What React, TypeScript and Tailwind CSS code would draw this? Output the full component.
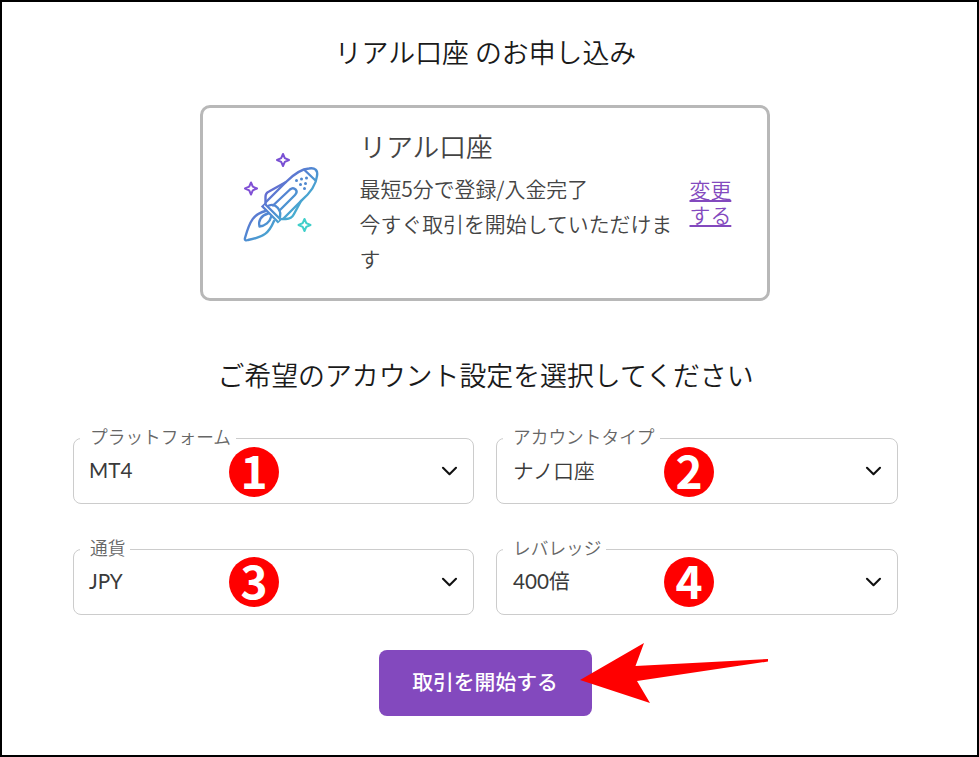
import React from 'react';

interface SelectFieldProps {
  label: string;
  value: string;
  step: number;
  valueClass: string;
  badgeClass: string;
}

const SelectField: React.FC<SelectFieldProps> = ({ label, value, step, valueClass, badgeClass }) => {
  return (
    <fieldset className="relative h-[77px] min-w-0 rounded-lg border border-[#cccccc] pr-[15px] pl-[6px]">
      <legend className="h-[22px] pr-[5px] pl-[10px] text-[17.7px] leading-[19px] font-[350] text-[#666666]">
        {label}
      </legend>
      <button type="button" className="flex h-[43px] w-full items-center justify-between text-[20.7px] leading-[43px] text-[#3a3a3a]">
        <span className={valueClass}>{value}</span>
        <svg className="h-[10px] w-[17px]" viewBox="0 0 17 10" fill="none" stroke="#111111" strokeWidth="2.1" strokeLinecap="round" strokeLinejoin="round">
          <path d="M2 1.8 8.5 8.2 15 1.8" />
        </svg>
      </button>
      <span className={`absolute flex h-[50px] w-[50px] justify-center rounded-full bg-[#ff0000] text-[46px] leading-[44px] font-bold text-white ${badgeClass}`}>
        {step}
      </span>
    </fieldset>
  );
};

const RocketIcon: React.FC = () => {
  return (
    <svg className="h-[110px] w-[110px] shrink-0" viewBox="0 0 110 110" fill="none" strokeWidth="2.4" strokeLinecap="round" strokeLinejoin="round">
      <defs>
        <linearGradient id="rocket" gradientUnits="userSpaceOnUse" x1="36" y1="36" x2="76" y2="76">
          <stop offset="0" stopColor="#7358d0" />
          <stop offset="0.5" stopColor="#5088d2" />
          <stop offset="1" stopColor="#42bfcf" />
        </linearGradient>
      </defs>
      <g stroke="url(#rocket)">
        <path d="M35.500 65V57C35.500 54 36.500 52.500 39 51.500L56 42C63 35 70 29 79 28.500C85 27.500 88 30 87 36C86 46 78 55 71 61L64 74C62 78 60 79 56 79H52" />
        <path d="M56 42 36 62M71 61 54 78M75 30.500 85 40" />
        <path d="M33 64.500 50 81.500" strokeWidth="6" strokeLinecap="butt" />
        <path d="M34.500 66 48.500 80" stroke="#ffffff" strokeWidth="1.200" />
        <path d="M43 65.500 60 49.500C64 46 69 51 65 55L49.500 70.500" />
        <path d="M39 65.500C44 63.500 48 67 49.500 70.500C51 73 50.500 75 50 77" />
        <path d="M35.500 71C24 74 20 80 15 98C14.500 100 15.500 101 18 100C34 97 39 93 44 81" />
        <path d="M38 73.500C31 75.500 28 81 29.500 86.500C35 86 40 82 41 77" />
      </g>
      <g fill="#5088cf">
        <circle cx="66.500" cy="40.500" r="1.500" />
        <circle cx="71.500" cy="39" r="1.500" />
        <circle cx="76.500" cy="38" r="1.500" />
        <circle cx="70.500" cy="44.500" r="1.500" />
        <circle cx="75.500" cy="43.500" r="1.500" />
        <circle cx="74.500" cy="48.500" r="1.500" />
      </g>
      <g strokeWidth="2">
        <path stroke="#7950d3" d="M53 14 54.800 18.200 59 20 54.800 21.800 53 26 51.200 21.800 47 20 51.200 18.200Z" />
        <path stroke="#8151d5" d="M21 42.500 22.800 46.700 27 48.500 22.800 50.300 21 54.500 19.200 50.300 15 48.500 19.200 46.700Z" />
        <path stroke="#40cfca" d="M74.500 79 76.300 83.200 80.500 85 76.300 86.800 74.500 91 72.700 86.800 68.500 85 72.700 83.200Z" />
      </g>
    </svg>
  );
};

const latinValue = "pl-[9px] font-['Lato','Noto_Sans_CJK_JP',sans-serif] font-normal";

const fields: SelectFieldProps[] = [
  { label: 'プラットフォーム', value: 'MT4', step: 1, valueClass: latinValue, badgeClass: 'top-[-2px] left-[155px]' },
  { label: 'アカウントタイプ', value: 'ナノ口座', step: 2, valueClass: 'pl-[10px] font-[350]', badgeClass: 'top-[-2px] left-[167px]' },
  { label: '通貨', value: 'JPY', step: 3, valueClass: latinValue, badgeClass: 'top-[-3px] left-[155px]' },
  { label: 'レバレッジ', value: '400倍', step: 4, valueClass: "pl-[10px] font-['Lato','Noto_Sans_CJK_JP',sans-serif] font-normal", badgeClass: 'top-[-3px] left-[167px]' },
];

const App: React.FC = () => {
  return (
    <main className="flex h-[757px] w-[979px] flex-col overflow-hidden border-2 border-black bg-white pt-[30px] pr-[79px] pl-[71px] font-['Noto_Sans_CJK_JP',sans-serif]">
      <h1 className="h-10 text-center text-[26.9px] leading-[39px] font-[350] text-[#1a1a1a]">リアル口座 のお申し込み</h1>

      <section className="mt-[33px] mr-[2px] flex h-[196px] w-[570px] self-center rounded-[10px] border-[3px] border-[#b8b8b8] pt-[21px] pl-[27px]">
        <div className="mt-[11px]">
          <RocketIcon />
        </div>
        <div className="ml-[20px] w-[316px] shrink-0 text-[#444444]">
          <h2 className="h-[42px] text-[26.7px] leading-[34px] font-[350]">リアル口座</h2>
          <p className="text-[20.9px] leading-[35px] font-[350]">
            最短5分で登録/入金完了
            <br />
            今すぐ取引を開始していただけます
          </p>
        </div>
        <a href="#" className="mt-[48px] ml-[14px] w-[42px] shrink-0 text-[20.9px] leading-[25px] font-[350] text-[#8349be] underline decoration-2 underline-offset-[2px]">
          変更する
        </a>
      </section>

      <h2 className="mt-[54px] h-10 text-center text-[26.9px] leading-[39px] font-[350] text-[#1a1a1a]">ご希望のアカウント設定を選択してください</h2>

      <div className="mt-[32px] grid grid-cols-[401px_402px] gap-x-[22px] gap-y-[34px]">
        {fields.map((field) => (
          <SelectField key={field.step} {...field} />
        ))}
      </div>

      <div className="relative mt-[35px] w-[213px] self-center">
        <button type="button" className="h-[66px] w-full rounded-lg bg-[#8349be] pr-px pb-[2px] text-[20.8px] font-medium text-white">
          取引を開始する
        </button>
        <svg className="absolute top-[-8px] left-[201px] h-[62px] w-[190px]" viewBox="0 0 190 62" fill="#ff0000">
          <path d="M0 38 64 1 55.500 24 188 17V19.500L57 39 70 61Z" />
        </svg>
      </div>
    </main>
  );
};

export default App;
